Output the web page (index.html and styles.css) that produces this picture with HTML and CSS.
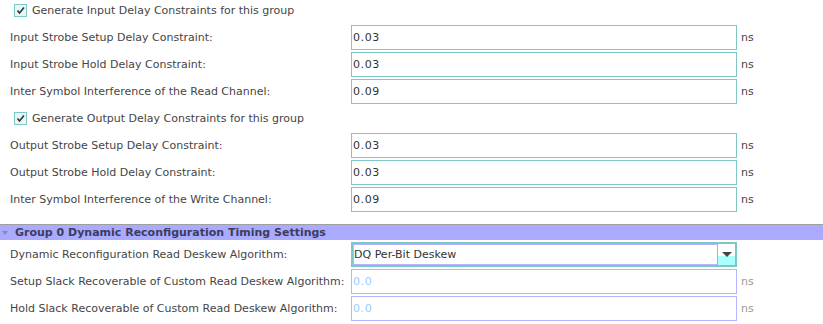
FILE: index.html
```html
<!DOCTYPE html>
<html>
<head>
<meta charset="utf-8">
<link rel="stylesheet" href="styles.css">
</head>
<body>
<div class="form">
  <div class="check-row">
    <span class="checkbox"><svg width="9" height="9" viewBox="0 0 9 9"><path d="M1.5 4.5 L3.5 7 L8 1.5" fill="none" stroke="#333" stroke-width="1.6"/></svg></span>
    <span class="check-label">Generate Input Delay Constraints for this group</span>
  </div>
  <div class="row"><span class="label">Input Strobe Setup Delay Constraint:</span><span class="field">0.03</span><span class="unit">ns</span></div>
  <div class="row"><span class="label">Input Strobe Hold Delay Constraint:</span><span class="field">0.03</span><span class="unit">ns</span></div>
  <div class="row"><span class="label">Inter Symbol Interference of the Read Channel:</span><span class="field">0.09</span><span class="unit">ns</span></div>
  <div class="check-row check-row2">
    <span class="checkbox"><svg width="9" height="9" viewBox="0 0 9 9"><path d="M1.5 4.5 L3.5 7 L8 1.5" fill="none" stroke="#333" stroke-width="1.6"/></svg></span>
    <span class="check-label">Generate Output Delay Constraints for this group</span>
  </div>
  <div class="row"><span class="label">Output Strobe Setup Delay Constraint:</span><span class="field">0.03</span><span class="unit">ns</span></div>
  <div class="row"><span class="label">Output Strobe Hold Delay Constraint:</span><span class="field">0.03</span><span class="unit">ns</span></div>
  <div class="row"><span class="label">Inter Symbol Interference of the Write Channel:</span><span class="field">0.09</span><span class="unit">ns</span></div>
</div>
<div class="section-header"><span class="tri"></span>Group 0 Dynamic Reconfiguration Timing Settings</div>
<div class="form">
  <div class="row"><span class="label">Dynamic Reconfiguration Read Deskew Algorithm:</span><span class="combo"><span class="combo-text">DQ Per-Bit Deskew</span><span class="combo-btn"><span class="combo-arrow"></span></span></span><span class="unit"></span></div>
  <div class="row"><span class="label">Setup Slack Recoverable of Custom Read Deskew Algorithm:</span><span class="field disabled">0.0</span><span class="unit dim">ns</span></div>
  <div class="row"><span class="label">Hold Slack Recoverable of Custom Read Deskew Algorithm:</span><span class="field disabled">0.0</span><span class="unit dim">ns</span></div>
</div>
</body>
</html>
```

FILE: styles.css
```css
html, body {
  margin: 0;
  padding: 0;
  background: #ffffff;
}
body {
  font-family: "DejaVu Sans", "Verdana", sans-serif;
  font-size: 11px;
  color: #454545;
  width: 823px;
  height: 324px;
  overflow: hidden;
}
.form {
  display: flex;
  flex-direction: column;
}
.check-row {
  height: 24px;
  display: flex;
  align-items: center;
  padding-left: 14px;
  box-sizing: border-box;
  padding-bottom: 3px;
}
.check-row2 {
  height: 27px;
  padding-bottom: 1px;
}
.checkbox {
  width: 11px;
  height: 11px;
  border: 1px solid #7ec7c7;
  background: #e6f7f7;
  display: flex;
  align-items: center;
  justify-content: center;
  margin-right: 5px;
}
.checkbox svg {
  display: block;
}
.check-label {
  color: #454545;
}
.row {
  display: grid;
  grid-template-columns: 351px 386px 1fr;
  align-items: center;
  height: 27px;
}
.label {
  padding-left: 10px;
  white-space: nowrap;
}
.field {
  height: 25px;
  box-sizing: border-box;
  border: 1px solid #7fc6c6;
  padding-left: 1px;
  display: flex;
  align-items: center;
  color: #333;
  letter-spacing: 0.6px;
}
.field.disabled {
  border-color: #b4b4ff;
  color: #99ccff;
}
.unit {
  padding-left: 4px;
  color: #454545;
}
.unit.dim {
  color: #9a9a9a;
}
.section-header {
  margin-top: 11px;
  border-top: 1px solid #a0a0a0;
  height: 15px;
  background: #aaaaff;
  font-weight: bold;
  color: #3c3c5c;
  display: flex;
  align-items: center;
  padding-left: 2px;
  margin-bottom: 1px;
}
.tri {
  width: 0;
  height: 0;
  border-left: 3.5px solid transparent;
  border-right: 3.5px solid transparent;
  border-top: 4px solid #8888bb;
  margin-right: 7px;
}
.combo {
  height: 25px;
  box-sizing: border-box;
  border: 2px solid #7fc6c6;
  display: flex;
  background: #fff;
}
.combo-text {
  flex: 1;
  border: 1px solid #b4b4ff;
  border-right: 1px solid #7fc6c6;
  display: flex;
  align-items: center;
  padding-left: 0;
  color: #333;
}
.combo-btn {
  width: 17px;
  background: linear-gradient(#ffffff 0, #ffffff 58%, #aaffff 58%, #aaffff 100%);
  display: flex;
  justify-content: center;
  padding-top: 8px;
  box-sizing: border-box;
}
.combo-arrow {
  width: 0;
  height: 0;
  border-left: 5px solid transparent;
  border-right: 5px solid transparent;
  border-top: 5px solid #444;
}
```
